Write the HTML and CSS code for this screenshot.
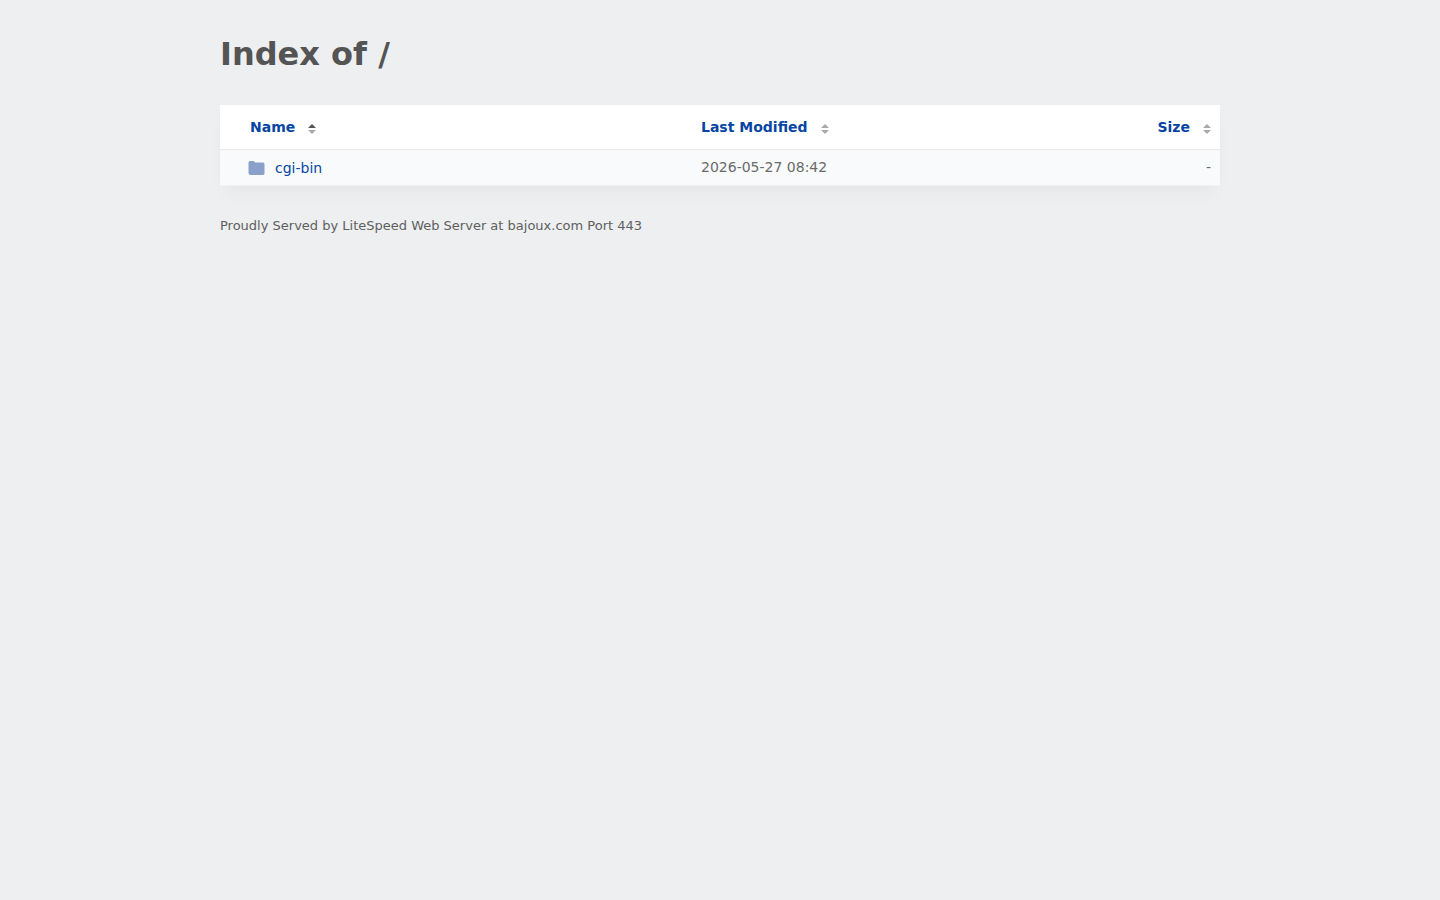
FILE: index.html
```html
<!DOCTYPE html>
<html lang="en">
<head>
<meta charset="utf-8">
<title>Index of /</title>
<link rel="stylesheet" href="styles.css">
</head>
<body>
<main class="content">
<h1 class="title">Index of /</h1>
<table class="listing">
<thead>
<tr>
<th class="name"><button type="button" class="sort">Name<svg class="arrows" viewBox="0 0 8 10" aria-hidden="true"><path class="active" d="M4 0L8 4H0z"/><path d="M0 6H8L4 10z"/></svg></button></th>
<th class="date"><button type="button" class="sort">Last Modified<svg class="arrows" viewBox="0 0 8 10" aria-hidden="true"><path d="M4 0L8 4H0zM0 6H8L4 10z"/></svg></button></th>
<th class="size"><button type="button" class="sort">Size<svg class="arrows" viewBox="0 0 8 10" aria-hidden="true"><path d="M4 0L8 4H0zM0 6H8L4 10z"/></svg></button></th>
</tr>
</thead>
<tbody>
<tr>
<td class="name"><a class="entry" href="#cgi-bin"><svg class="folder" viewBox="0 0 17 14" aria-hidden="true"><path d="M2 0H5.500Q6.500 0 7 1.500H15Q16.500 1.500 16.500 3.500V12Q16.500 14 15 14H2.500Q.5 14 .5 12V1.500Q.5 0 2 0z"/></svg>cgi-bin</a></td>
<td class="date">2026-05-27 08:42</td>
<td class="size">-</td>
</tr>
</tbody>
</table>
<footer class="footer">Proudly Served by LiteSpeed Web Server at bajoux.com Port 443</footer>
</main>
</body>
</html>
```
FILE: styles.css
```css
body {
  margin: 0;
  background: #edeff0;
  color: #545454;
  font: 14px/20px "DejaVu Sans", sans-serif;
}
.content {
  max-width: 1000px;
  margin: 0 auto;
  padding: 32px 20px;
}
.title {
  margin: 0 0 29px;
  font-size: 32px;
  line-height: 44px;
}
.listing {
  width: 100%;
  table-layout: fixed;
  border-collapse: separate;
  border-spacing: 0;
  background: #fff;
  box-shadow: 0 12px 20px -6px rgba(0, 0, 0, 0.04), 0 2px 12px rgba(0, 0, 0, 0.01);
}
.listing th {
  padding: 12px 9px;
  border-bottom: 1px solid #e8eaeb;
  text-align: left;
}
.listing td {
  padding: 7px 9px 8px;
  border-bottom: 1px solid #f0f2f3;
  background: #f8fafb;
  color: #6a6a6a;
}
.listing th.name {
  width: 433px;
  padding-left: 30px;
}
.listing td.name {
  padding: 8px 9px 7px 28px;
}
.listing .size {
  width: 200px;
  text-align: right;
}
.sort {
  display: inline-flex;
  align-items: center;
  gap: 13px;
  padding: 0;
  border: 0;
  background: none;
  color: #0645a3;
  font: inherit;
  cursor: pointer;
}
.arrows {
  width: 8px;
  height: 10px;
  margin-top: 3px;
  fill: #aaa;
}
.arrows .active {
  fill: #545454;
}
.entry {
  display: flex;
  align-items: center;
  gap: 10px;
  color: #0645a3;
  text-decoration: none;
}
.folder {
  width: 17px;
  height: 14px;
  fill: #89a1ca;
}
.footer {
  padding-top: 30px;
  color: #606060;
  font-size: 13px;
}
```
